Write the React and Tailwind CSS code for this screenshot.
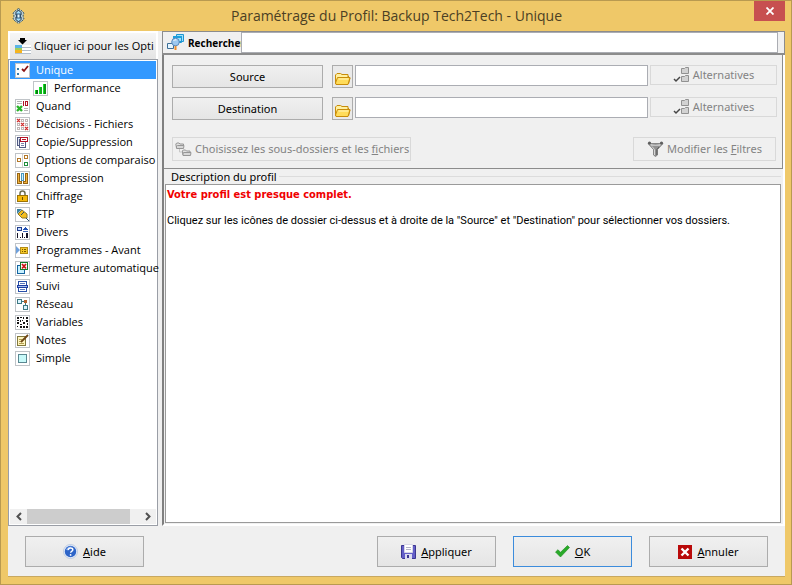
import React, { useState } from 'react';

/* ---------- small tree icons ---------- */

const Tile = ({ children, bg = '#fff' }) => (
  <svg width="15" height="15" viewBox="0 0 15 15" className="shrink-0" shapeRendering="crispEdges">
    <rect x="0.5" y="0.5" width="14" height="14" fill={bg} stroke="#c0c4c8" />
    {children}
  </svg>
);

const tileIcons = {
  unique: (
    <Tile>
      <path d="M2 5h2v2H2zM2 10h2v2H2z" fill="#3c7ba8" />
      <path d="M7 6l2 2 4-5" fill="none" stroke="#8c1414" strokeWidth="1.800" shapeRendering="auto" />
    </Tile>
  ),
  performance: (
    <Tile>
      <path d="M2 9h3v4H2z" fill="#0a7a14" />
      <path d="M6 6h3v7H6z" fill="#12b41c" />
      <path d="M10 3h3v10h-3z" fill="#0a9614" />
      <path d="M2 9h1v4H2zM6 6h1v7H6zM10 3h1v10h-1z" fill="#14e628" />
    </Tile>
  ),
  quand: (
    <Tile>
      <path d="M2 2.500h5M2 4.500h5M9 9.500h4M9 11.500h4" stroke="#b4b4b4" />
      <path d="M8 2h1v5H8zM10 2h3v5h-3z" fill="#b01428" />
      <path d="M11 3h1v3h-1z" fill="#fff" />
      <path d="M2 7l5 5M7 7l-5 5" stroke="#28b428" strokeWidth="2.400" shapeRendering="auto" />
    </Tile>
  ),
  decisions: (
    <Tile>
      <path
        d="M6.500 2.500h2v2h-2zM10.500 2.500h2v2h-2zM2.500 6.500h2v2h-2zM10.500 6.500h2v2h-2zM2.500 10.500h2v2h-2zM6.500 10.500h2v2h-2z"
        fill="none"
        stroke="#c0b6b6"
      />
      <path d="M2 2l3 3M5 2L2 5M6 6l3 3M9 6L6 9M10 10l3 3M13 10l-3 3" stroke="#d03030" strokeWidth="1.300" shapeRendering="auto" />
    </Tile>
  ),
  copie: (
    <Tile>
      <path d="M2.500 2.500h6v8h-6z" fill="#e4e8f4" stroke="#505a82" />
      <path d="M4.500 4.500h6v8h-6z" fill="#fff" stroke="#505a82" />
      <path d="M5.500 2.500h7v4h-7z" fill="#fff" stroke="#b41428" />
      <path d="M7 4h4v1H7z" fill="#b41428" />
      <path d="M6 8h3v1H6zM6 10h3v1H6z" fill="#7882aa" />
    </Tile>
  ),
  options: (
    <Tile>
      <path d="M7.500 1v13" stroke="#d0d0d0" />
      <path d="M2.500 5.500h3v3h-3z" fill="#fff" stroke="#b47828" />
      <path d="M9.500 2.500h3v3h-3z" fill="#fff" stroke="#b47828" />
      <path d="M9.500 9.500h3v3h-3z" fill="#fff" stroke="#1e8c3c" />
    </Tile>
  ),
  compression: (
    <Tile>
      <path d="M2.500 2.500h2v8h2v2h-4zM12.500 2.500h-2v8h-2v2h4z" fill="#f0b43c" stroke="#966414" />
      <path d="M6.500 2.500h2v7h-2z" fill="#d2f0ff" stroke="#4696be" />
    </Tile>
  ),
  chiffrage: (
    <Tile>
      <path d="M5 7V4.500a2.500 2.500 0 0 1 5 0V7" fill="none" stroke="#6e6e50" strokeWidth="1.500" shapeRendering="auto" />
      <path d="M2.500 6.500h10v6h-10z" fill="#f5b90a" stroke="#9b7305" />
      <path d="M7 8h1v3H7z" fill="#6e5000" />
    </Tile>
  ),
  ftp: (
    <Tile>
      <path d="M2 2h5L2 7z" fill="#3c82a0" shapeRendering="auto" />
      <path d="M3 7l4-4 5 4v4H7z" fill="#f5be1e" stroke="#8c7828" shapeRendering="auto" />
      <path d="M6 8l3-3M11 11l3 3" stroke="#28506e" shapeRendering="auto" />
    </Tile>
  ),
  divers: (
    <Tile>
      <path d="M2.500 2.500h4v3h-4z" fill="#c8dcff" stroke="#1e3c8c" />
      <path d="M8 5h5l-2.500-3z" fill="#1e50b4" />
      <path d="M8 6h5v1H8z" fill="#3c64b4" />
      <path d="M2 8h1v5H2zM5 12h1v1H5zM7 8h1v5H7zM9 12h1v1H9zM11 8h2v5h-2z" fill="#141428" />
    </Tile>
  ),
  programmes: (
    <Tile>
      <path d="M1 3l4 4-4 4z" fill="#6ea0dc" shapeRendering="auto" />
      <path d="M5.500 4.500h7v6h-7z" fill="#f5c828" stroke="#b48c14" />
      <path d="M7 6h1v1H7zM9 6h2v1H9zM7 8h1v1H7zM9 8h2v1H9z" fill="#785a00" />
    </Tile>
  ),
  fermeture: (
    <Tile>
      <path d="M2.500 4.500h7v8h-7z" fill="#c8f0ff" stroke="#1464a0" />
      <path d="M5.500 1.500h7v7h-7z" fill="#fff" stroke="#147828" />
      <path d="M7 3l4 4.500M11 3L7 7.500" stroke="#c81414" strokeWidth="1.800" shapeRendering="auto" />
    </Tile>
  ),
  suivi: (
    <Tile>
      <path d="M3.500 2.500h8v10h-8z" fill="#fff" stroke="#2850aa" />
      <path d="M2.500 6.500h10v2h-10z" fill="#a0bef0" stroke="#1e3ca0" />
      <path d="M5 4h5v1H5zM5 10h5v1H5z" fill="#5a78be" />
    </Tile>
  ),
  reseau: (
    <Tile>
      <path d="M2.500 2.500h4v4h-4zM8.500 8.500h4v4h-4z" fill="#dcf5ff" stroke="#3c7882" />
      <path d="M7 4.500h4M10.500 5v4" stroke="#3c7882" />
      <path d="M9 3h3v3H9z" fill="#b4642d" />
    </Tile>
  ),
  variables: (
    <Tile>
      <path
        d="M2 2h2v2H2zM5 2h2v1H5zM8 2h1v2H8zM11 2h2v2h-2zM2 5h2v1H2zM7 5h1v1H7zM11 5h2v2h-2zM2 7h2v2H2zM5 9h2v1H5zM5 11h2v2H5zM8 11h2v2H8zM12 8h1v2h-1zM11 11h2v2h-2zM2 11h1v1H2zM5 5h1v2H5zM8 7h2v2H8z"
        fill="#141414"
      />
    </Tile>
  ),
  notes: (
    <Tile>
      <path d="M2.500 3.500h8v9h-8z" fill="#fff5be" stroke="#82783c" />
      <path d="M4 6h3v1H4zM4 8h2v1H4zM4 10h5v1H4z" fill="#b4a050" />
      <path d="M6 9l7-7" stroke="#6e4614" strokeWidth="1.800" shapeRendering="auto" />
    </Tile>
  ),
  simple: (
    <Tile>
      <path d="M3.500 3.500h8v8h-8z" fill="#c8fafa" stroke="#5a8791" />
    </Tile>
  ),
};

const sections = [
  { id: 'unique', label: 'Unique' },
  { id: 'performance', label: 'Performance', nested: true },
  { id: 'quand', label: 'Quand' },
  { id: 'decisions', label: 'Décisions - Fichiers' },
  { id: 'copie', label: 'Copie/Suppression' },
  { id: 'options', label: 'Options de comparaiso' },
  { id: 'compression', label: 'Compression' },
  { id: 'chiffrage', label: 'Chiffrage' },
  { id: 'ftp', label: 'FTP' },
  { id: 'divers', label: 'Divers' },
  { id: 'programmes', label: 'Programmes - Avant' },
  { id: 'fermeture', label: 'Fermeture automatique' },
  { id: 'suivi', label: 'Suivi' },
  { id: 'reseau', label: 'Réseau' },
  { id: 'variables', label: 'Variables' },
  { id: 'notes', label: 'Notes' },
  { id: 'simple', label: 'Simple' },
];

/* ---------- larger icons ---------- */

const AppIcon = () => (
  <svg width="13" height="16" viewBox="0 0 13 16" className="shrink-0">
    <path d="M6.500 0.500L10 3l2 2-1 3 1 3-2 2-3.500 2.500L3 13l-2-2 1-3-1-3 2-2z" fill="#b9cdd2" stroke="#3c5a64" strokeDasharray="2 1" />
    <path d="M6.500 2L9 4.500v2.500L6.500 8 4 7V4.500zM6.500 8L9 9v2.500L6.500 14 4 11.500V9z" fill="#a0dcfa" stroke="#14283c" />
    <path d="M5 6h3v4H5z" fill="#e6faff" stroke="#143c64" strokeWidth="0.800" />
  </svg>
);

const ExpandIcon = () => (
  <svg width="16" height="17" viewBox="0 0 16 17" className="shrink-0" shapeRendering="crispEdges">
    <path d="M0 7h7v3H0z" fill="#5ab4e6" />
    <path d="M0 10h7v2H0z" fill="#a0cd5a" />
    <path d="M0 12h7v3H0z" fill="#f5b41e" />
    <path d="M7 7h9v8H7z" fill="#fff" />
    <path d="M7 9.500h9M7 12.500h9M0 15.500h16" stroke="#b4bec8" />
    <path d="M5 0h5v2h2L7.500 6.500 3 2h2z" fill="#000" shapeRendering="auto" />
  </svg>
);

const SearchIcon = () => (
  <svg width="17" height="17" viewBox="0 0 17 17" className="shrink-0">
    <path d="M9.500 0.500h7v7h-7zM6.500 2.500h8v6h-8z" fill="#a0e1fa" stroke="#1e96d2" />
    <path d="M6 2h9v2H6z" fill="#1ea0dc" />
    <path d="M0.500 9.500h6v5h-6z" fill="#e6f5ff" stroke="#3c6e96" />
    <path d="M8.500 11v5" stroke="#f08c28" strokeWidth="2" />
    <circle cx="8.500" cy="8" r="3.800" fill="#9cc8f0" stroke="#5a8cbe" />
    <path d="M6.500 7q1-2 3-1" fill="none" stroke="#fff" />
  </svg>
);

const FolderIcon = () => (
  <svg width="17" height="14" viewBox="0 0 17 14" className="mt-1 shrink-0">
    <path d="M1.500 12V3L3 1.500h3.500L8 2.500h6V5" fill="#fff0a0" stroke="#c88c0a" strokeLinejoin="round" />
    <path d="M14 4l2 2-1.500 6" fill="none" stroke="#c88c0a" />
    <path d="M2 12.500L1.500 11 3.500 5.500h12.500l-2 7z" fill="#ffdc5a" stroke="#c88c0a" strokeLinejoin="round" />
    <path d="M4.500 7h10" stroke="#fff5be" />
  </svg>
);

const AlternativesIcon = () => (
  <svg width="17" height="16" viewBox="0 0 17 16" className="shrink-0">
    <path d="M8.500 1.500h3l1-1h3v6h-7zM8.500 9.500h3l1-1h3v6h-7z" fill="#d2d2d2" stroke="#919191" />
    <path d="M1 12l2 2 4-4" fill="none" stroke="#464646" strokeWidth="1.500" />
  </svg>
);

const SubfoldersIcon = () => (
  <svg width="17" height="15" viewBox="0 0 17 15" className="shrink-0">
    <path d="M1.500 6L0.800 2l1-1H4l1 1h3.500v1.500" fill="#e1e1e1" stroke="#969696" strokeLinejoin="round" />
    <path d="M1.500 6.500V4l1-.5h6.500L8.500 6.500z" fill="#d7d7d7" stroke="#969696" strokeLinejoin="round" />
    <path d="M8 13L7.300 9l1-1h2.200l1 1H15v1.500" fill="#e1e1e1" stroke="#969696" strokeLinejoin="round" />
    <path d="M8 13.500V11l1-.5h7l-.5 3z" fill="#d7d7d7" stroke="#969696" strokeLinejoin="round" />
    <path d="M4.500 7v3H7" fill="none" stroke="#c8c8c8" />
  </svg>
);

const FilterIcon = () => (
  <svg width="17" height="16" viewBox="0 0 17 16" className="shrink-0">
    <path d="M1 2.500L6.500 8.500V14l2 1.500L10.500 14V8.500L16 2.500z" fill="#919191" stroke="#787878" strokeWidth="0.800" />
    <path d="M2 2q6.500 3.500 13 0l-2 3H4z" fill="#c3c3c3" />
    <circle cx="2.500" cy="2" r="1.600" fill="#5f5f5f" />
    <circle cx="14.500" cy="2" r="1.600" fill="#5f5f5f" />
    <path d="M5 5.500l2.500 3V14" fill="none" stroke="#d7d7d7" />
    <path d="M12 6L9.800 8.500V14" fill="none" stroke="#5f5f5f" />
  </svg>
);

const HelpIcon = () => (
  <svg width="15" height="15" viewBox="0 0 15 15" className="shrink-0">
    <circle cx="7.500" cy="7.500" r="7" fill="#e6eefa" stroke="#b4c3dc" strokeWidth="0.800" />
    <circle cx="7.500" cy="7.500" r="5.700" fill="#2d64c8" />
    <path d="M3 5.500q2-3.500 6-3-3 1-3.500 4-1.500 0-2.500-1z" fill="#82aaeb" />
    <path d="M5.300 6q.2-2 2.300-2t2.200 1.700q0 1-1.200 1.600-.9.500-.9 1.500" fill="none" stroke="#fff" strokeWidth="1.500" />
    <circle cx="7.600" cy="10.900" r="0.900" fill="#fff" />
  </svg>
);

const SaveIcon = () => (
  <svg width="15" height="16" viewBox="0 0 15 16" className="shrink-0">
    <path d="M0.500 1.500h14v13h-13l-1-1z" fill="#645fc8" stroke="#3c3791" />
    <path d="M3.500 0.500h8v8h-8z" fill="#fff" stroke="#d7d7e6" />
    <path d="M5 3.500h5M5 5.500h5" stroke="#b4b4c8" />
    <path d="M4 10h7v5H4z" fill="#dcdcf0" />
    <path d="M6 11h2v3H6z" fill="#3c3791" />
  </svg>
);

const CheckIcon = () => (
  <svg width="15" height="13" viewBox="0 0 15 13" className="shrink-0">
    <path d="M0.500 7L3 4.700l2.500 2.600L12.500 0.500l2 2L5.500 12z" fill="#28aa28" stroke="#1e8c1e" strokeWidth="0.600" />
  </svg>
);

const CancelIcon = () => (
  <svg width="14" height="14" viewBox="0 0 14 14" className="shrink-0">
    <path d="M0 0h14v14H0z" fill="#b90a0a" />
    <path d="M3.500 3.500l7 7M10.500 3.500l-7 7" stroke="#fff" strokeWidth="2.400" />
  </svg>
);

const Chevron = ({ d }) => (
  <svg width="8" height="9" viewBox="0 0 8 9">
    <path d={d} fill="none" stroke="#505050" strokeWidth="2" />
  </svg>
);

/* ---------- building blocks ---------- */

const FooterButton = ({ icon, children, primary, className = '' }) => (
  <button
    type="button"
    className={`flex h-[31px] w-[119px] items-center justify-center gap-[5px] border bg-linear-to-b from-[#f0f0f0] to-[#e5e5e5] ${
      primary ? 'border-[#3c8cdc]' : 'border-[#acacac]'
    } ${className}`}
  >
    {icon}
    <span>{children}</span>
  </button>
);

const PathRow = ({ id, label }) => {
  const [path, setPath] = useState('');

  return (
    <div className="flex items-start">
      <button
        type="button"
        className="h-[23px] w-[151px] shrink-0 border border-[#acacac] bg-linear-to-b from-[#f0f0f0] to-[#e5e5e5]"
      >
        {label}
      </button>
      <button
        type="button"
        aria-label={`Parcourir ${label}`}
        className="ml-[9px] flex h-[23px] w-[21px] shrink-0 items-center justify-center border border-[#acacac] bg-[#eaeaea]"
      >
        <FolderIcon />
      </button>
      <input
        id={id}
        aria-label={label}
        value={path}
        onChange={(e) => setPath(e.target.value)}
        className="ml-[2px] h-[21px] min-w-0 flex-1 border border-[#abadb3] bg-white px-1 outline-none"
      />
      <button
        type="button"
        disabled
        className="ml-[2px] flex h-5 w-[127px] shrink-0 items-center justify-center gap-[3px] border border-[#d9d9d9] text-[#838383]"
      >
        <AlternativesIcon />
        <span>Alternatives</span>
      </button>
    </div>
  );
};

const Sidebar = () => {
  const [selected, setSelected] = useState('unique');

  return (
    <aside className="flex w-[150px] shrink-0 flex-col font-['Open_Sans','Noto_Sans',sans-serif]">
      <div className="bg-white p-[2px] pb-0">
        <button
          type="button"
          className="flex h-[26px] w-full items-center gap-[3px] bg-linear-to-b from-[#f6f6f6] to-[#e4e4e4] pl-[5px] whitespace-nowrap"
        >
          <ExpandIcon />
          <span>Cliquer ici pour les Opti</span>
        </button>
      </div>
      <div className="flex flex-1 flex-col border border-[#9a9ea6] bg-white p-px">
        <nav className="flex flex-1 flex-col">
          {sections.map(({ id, label, nested }) => (
            <button
              key={id}
              type="button"
              onClick={() => setSelected(id)}
              className={`flex h-[18px] items-center gap-[6px] whitespace-nowrap ${
                nested ? 'pl-[23px]' : 'pl-[5px]'
              } ${selected === id ? 'bg-[#3399ff] text-white' : ''}`}
            >
              {tileIcons[id]}
              <span>{label}</span>
            </button>
          ))}
        </nav>
        <div className="flex h-[15px] bg-[#f0f0f0]">
          <button type="button" aria-label="Défiler à gauche" className="flex w-[17px] items-center justify-center">
            <Chevron d="M6 1L2.500 4.500 6 8" />
          </button>
          <div className="flex-1">
            <div className="h-full w-[92%] bg-[#cdcdcd]" />
          </div>
          <button type="button" aria-label="Défiler à droite" className="flex w-[17px] items-center justify-center">
            <Chevron d="M2 1l3.500 3.500L2 8" />
          </button>
        </div>
      </div>
    </aside>
  );
};

const App = () => {
  const [query, setQuery] = useState('');

  return (
    <div className="flex min-h-screen flex-col border border-[#b99a50] bg-[#efc868] pr-[6px] pb-[7px] pl-[7px] font-['Noto_Sans','Open_Sans',sans-serif] text-[11px] leading-[16px] text-black">
      <header className="flex h-[30px] items-center pl-1">
        <AppIcon />
        <h1 className="flex-1 pl-[14px] text-center font-['Open_Sans','Noto_Sans',sans-serif] text-[14px] text-[#4b3f24]">
          Paramétrage du Profil: Backup Tech2Tech - Unique
        </h1>
        <button
          type="button"
          aria-label="Fermer"
          className="flex h-5 w-[31px] items-center justify-center self-start bg-[#c75050]"
        >
          <svg width="8" height="8" viewBox="0 0 8 8">
            <path d="M0.500 0.500l7 7M7.500 0.500l-7 7" stroke="#fff" strokeWidth="1.800" />
          </svg>
        </button>
      </header>

      <div className="flex flex-1 flex-col border-b border-[#c8a860] bg-[#f0f0f0]">
        <main className="flex flex-1 gap-1">
          <Sidebar />

          <div className="flex min-w-0 flex-1 flex-col">
            <div className="flex h-6 items-start border border-b-2 border-[#8c8c8c] pl-1">
              <label
                htmlFor="search"
                className="flex h-[21px] w-[74px] shrink-0 items-center gap-1 font-['Open_Sans','Noto_Sans',sans-serif] text-[10px] font-bold"
              >
                <SearchIcon />
                Rechercher
              </label>
              <input
                id="search"
                value={query}
                onChange={(e) => setQuery(e.target.value)}
                className="mr-[6px] h-[21px] min-w-0 flex-1 border border-[#abadb3] bg-white px-1 outline-none"
              />
            </div>

            <div className="flex flex-1 flex-col border-r-2 border-b-2 border-l-2 border-r-white border-b-white border-l-[#808080]">
              <section className="border-r border-b border-[#8c8c8c] pt-[10px] pr-[5px] pb-[7px] pl-2">
                <div className="flex flex-col gap-[9px]">
                  <PathRow id="source" label="Source" />
                  <PathRow id="destination" label="Destination" />
                </div>
                <div className="mt-[17px] flex justify-between pr-px text-[#838383]">
                  <button
                    type="button"
                    disabled
                    className="flex h-6 w-[239px] items-center gap-[3px] border border-[#d9d9d9] pl-[2px] whitespace-nowrap"
                  >
                    <SubfoldersIcon />
                    <span>
                      Choisissez les sous-dossiers et les <u>f</u>ichiers
                    </span>
                  </button>
                  <button
                    type="button"
                    disabled
                    className="flex h-6 w-[143px] items-center justify-center gap-[3px] border border-[#d9d9d9] whitespace-nowrap"
                  >
                    <FilterIcon />
                    <span>
                      Modifier les <u>F</u>iltres
                    </span>
                  </button>
                </div>
              </section>

              <section className="flex flex-1 flex-col pr-[2px] pb-px pl-px">
                <div className="flex h-[15px] items-center gap-[2px] pl-[6px]">
                  <h2 className="leading-[14px]">Description du profil</h2>
                  <div className="h-px flex-1 bg-[#dcdcdc]" />
                </div>
                <div className="flex-1 border border-[#9a9a9a] bg-white px-px pt-[3px] leading-[13px]">
                  <p className="font-['DejaVu_Sans_Condensed','DejaVu_Sans',sans-serif] font-bold text-[#f00000]">
                    Votre profil est presque complet.
                  </p>
                  <p className="mt-[13px] font-['Roboto','Liberation_Sans',sans-serif]">
                    Cliquez sur les icônes de dossier ci-dessus et à droite de la "Source" et "Destination" pour sélectionner vos
                    dossiers.
                  </p>
                </div>
              </section>
            </div>
          </div>
        </main>

        <footer className="flex gap-[17px] pt-[10px] pr-[17px] pb-[9px] pl-[17px]">
          <FooterButton icon={<HelpIcon />} className="mr-auto">
            <u>A</u>ide
          </FooterButton>
          <FooterButton icon={<SaveIcon />}>
            <u>A</u>ppliquer
          </FooterButton>
          <FooterButton icon={<CheckIcon />} primary>
            <u>O</u>K
          </FooterButton>
          <FooterButton icon={<CancelIcon />}>
            <u>A</u>nnuler
          </FooterButton>
        </footer>
      </div>
    </div>
  );
};

export default App;
